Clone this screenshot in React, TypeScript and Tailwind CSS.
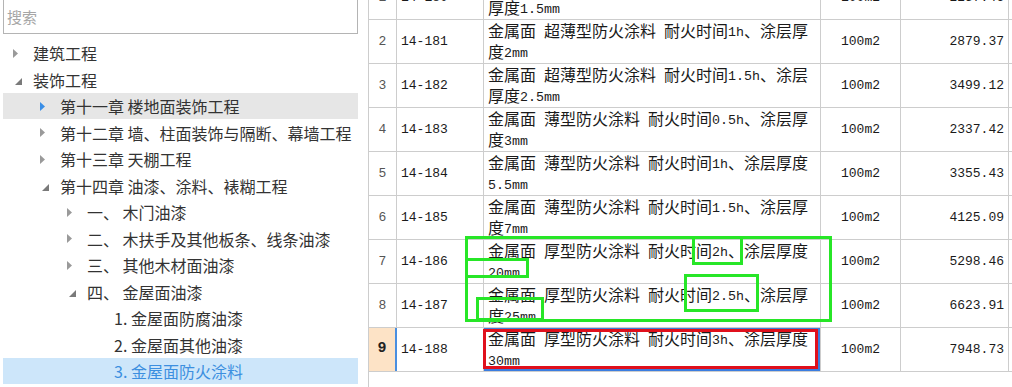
import React from 'react';

type Arrow = 'closed' | 'open' | 'none';

interface TreeNode {
  label: string;
  level: number;
  arrow: Arrow;
  hover?: boolean;
  selected?: boolean;
}

const tree: TreeNode[] = [
  { label: '建筑工程', level: 0, arrow: 'closed' },
  { label: '装饰工程', level: 0, arrow: 'open' },
  { label: '第十一章 楼地面装饰工程', level: 1, arrow: 'closed', hover: true },
  { label: '第十二章 墙、柱面装饰与隔断、幕墙工程', level: 1, arrow: 'closed' },
  { label: '第十三章 天棚工程', level: 1, arrow: 'closed' },
  { label: '第十四章 油漆、涂料、裱糊工程', level: 1, arrow: 'open' },
  { label: '一、 木门油漆', level: 2, arrow: 'closed' },
  { label: '二、 木扶手及其他板条、线条油漆', level: 2, arrow: 'closed' },
  { label: '三、 其他木材面油漆', level: 2, arrow: 'closed' },
  { label: '四、 金屋面油漆', level: 2, arrow: 'open' },
  { label: '1. 金屋面防腐油漆', level: 3, arrow: 'none' },
  { label: '2. 金屋面其他油漆', level: 3, arrow: 'none' },
  { label: '3. 金屋面防火涂料', level: 3, arrow: 'none', selected: true },
];

const rows = [
  { no: 1, code: '14-180', desc: ['金属面 超薄型防火涂料 耐火时间0.5h、涂层', '厚度1.5mm'], unit: '100m2', price: '2257.46' },
  { no: 2, code: '14-181', desc: ['金属面 超薄型防火涂料 耐火时间1h、涂层厚', '度2mm'], unit: '100m2', price: '2879.37' },
  { no: 3, code: '14-182', desc: ['金属面 超薄型防火涂料 耐火时间1.5h、涂层', '厚度2.5mm'], unit: '100m2', price: '3499.12' },
  { no: 4, code: '14-183', desc: ['金属面 薄型防火涂料 耐火时间0.5h、涂层厚', '度3mm'], unit: '100m2', price: '2337.42' },
  { no: 5, code: '14-184', desc: ['金属面 薄型防火涂料 耐火时间1h、涂层厚度', '5.5mm'], unit: '100m2', price: '3355.43' },
  { no: 6, code: '14-185', desc: ['金属面 薄型防火涂料 耐火时间1.5h、涂层厚', '度7mm'], unit: '100m2', price: '4125.09' },
  { no: 7, code: '14-186', desc: ['金属面 厚型防火涂料 耐火时间2h、涂层厚度', '20mm'], unit: '100m2', price: '5298.46' },
  { no: 8, code: '14-187', desc: ['金属面 厚型防火涂料 耐火时间2.5h、涂层厚', '度25mm'], unit: '100m2', price: '6623.91' },
  { no: 9, code: '14-188', desc: ['金属面 厚型防火涂料 耐火时间3h、涂层厚度', '30mm'], unit: '100m2', price: '7948.73' },
];

// green / red marks drawn over the grid
const marks = [
  { x: 465, y: 236, w: 367, h: 86, c: 'green' },
  { x: 465, y: 258, w: 64, h: 20, c: 'green' },
  { x: 476, y: 297, w: 68, h: 24, c: 'green' },
  { x: 692, y: 236, w: 51, h: 29, c: 'green' },
  { x: 684, y: 274, w: 75, h: 38, c: 'green' },
  { x: 483, y: 329, w: 335, h: 40, c: 'red' },
];

function TreeArrow({ kind, active }: { kind: Arrow; active?: boolean }) {
  if (kind === 'none') return null;
  if (kind === 'closed') {
    return (
      <svg width="5" height="9" viewBox="0 0 5 9">
        <path d="M0 0 L5 4.5 L0 9 Z" fill={active ? '#3a8ee6' : '#9a9a9a'} />
      </svg>
    );
  }
  return (
    <svg width="7" height="7" viewBox="0 0 7 7" className="ml-[2px] mt-[3px]">
      <path d="M7 0 L7 7 L0 7 Z" fill="#7a7a7a" />
    </svg>
  );
}

function Mixed({ text }: { text: string }) {
  const parts = text.split(/([\x20-\x7e]+)/);
  return (
    <>
      {parts.map((p, i) =>
        /[\x20-\x7e]/.test(p) ? (
          <span key={i} className="font-['Liberation_Mono',monospace] text-[13.3px] whitespace-pre align-[1px]">
            {p}
          </span>
        ) : (
          <span key={i}>{p}</span>
        )
      )}
    </>
  );
}

export default function App() {
  return (
    <div className="relative w-[1012px] h-[387px] overflow-hidden bg-white flex font-['Noto_Sans_CJK_SC',sans-serif]">
      {/* left tree */}
      <div className="w-[368px] shrink-0 pl-[3px] pr-[10px]">
        <div className="-mt-px h-[35px] border border-[#b4b4b4] px-[3px] leading-[33px] text-[15px] text-[#a6a6a6]">
          搜索
        </div>
        <div className="mt-[5.75px]">
          {tree.map((n, i) => (
            <div
              key={i}
              className={`flex items-center h-[26.5px] text-[16px] whitespace-nowrap ${
                n.selected ? 'bg-[#cde6fa] text-[#3c8fe0]' : n.hover ? 'bg-[#e6e6e6] text-[#333]' : 'text-[#333]'
              }`}
              style={{ paddingLeft: n.level * 27 }}
            >
              <div className="w-[30px] shrink-0 pl-[10px] flex items-center">
                <TreeArrow kind={n.arrow} active={n.hover} />
              </div>
              <span>{n.label}</span>
            </div>
          ))}
        </div>
      </div>

      {/* right grid */}
      <div className="flex-1 border-l border-[#cdcdcd] overflow-hidden">
        <div className="-mt-[24px]">
          {rows.map((r) => {
            const sel = r.no === 9;
            return (
              <div key={r.no} className="flex h-[44px] border-b border-[#cdcdcd] text-[#1a1a1a]">
                <div
                  className={`w-[28px] shrink-0 flex items-center justify-center font-['Liberation_Mono',monospace] text-[13px] ${
                    sel
                      ? 'bg-[#fde3c6] border-r-2 border-[#4a8fe0] font-bold text-[15px] text-[#222]'
                      : 'border-r border-[#cdcdcd] text-[#555]'
                  }`}
                >
                  {r.no}
                </div>
                <div className="w-[87px] shrink-0 border-r border-[#cdcdcd] flex items-center pl-[4px] font-['Liberation_Mono',monospace] text-[13px]">
                  {r.code}
                </div>
                <div
                  className={`w-[337px] shrink-0 border-r border-[#cdcdcd] flex flex-col justify-center pl-[4px] text-[16px] leading-[18px] whitespace-nowrap ${
                    sel ? 'shadow-[inset_0_0_0_2px_#3b7de0]' : ''
                  }`}
                >
                  {r.desc.map((l, i) => (
                    <div key={i}>
                      <Mixed text={l} />
                    </div>
                  ))}
                </div>
                <div className="w-[80px] shrink-0 border-r border-[#cdcdcd] flex items-center justify-center font-['Liberation_Mono',monospace] text-[13px]">
                  {r.unit}
                </div>
                <div className="w-[108px] shrink-0 border-r border-[#cdcdcd] flex items-center justify-end pr-[4px] font-['Liberation_Mono',monospace] text-[13px]">
                  {r.price}
                </div>
              </div>
            );
          })}
        </div>
      </div>

      {/* annotation boxes */}
      {marks.map((m, i) => (
        <div
          key={i}
          className={`absolute pointer-events-none border-[3px] ${m.c === 'red' ? 'border-[#e0101c]' : 'border-[#27e627]'}`}
          style={{ left: m.x, top: m.y, width: m.w, height: m.h }}
        />
      ))}
    </div>
  );
}
